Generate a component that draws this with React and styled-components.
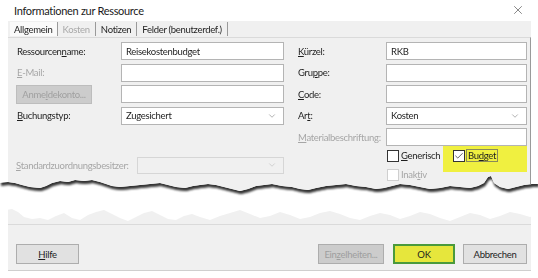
import React from "react";
import styled, { createGlobalStyle } from "styled-components";
import { X, ChevronDown, Check } from "lucide-react";

// torn paper edges: [x, y] points, clip-path builds a polygon from them

const topEdge = [
  [0, 183], [8, 182], [15, 183], [22, 185], [30, 187], [40, 188], [46, 186], [52, 183],
  [60, 181], [68, 182], [75, 180], [84, 181], [92, 180], [100, 182], [106, 184], [112, 186],
  [120, 187], [130, 186], [140, 185], [150, 184], [160, 183], [168, 185], [176, 187], [185, 188],
  [193, 186], [200, 185], [208, 184], [216, 185], [224, 187], [232, 189], [240, 191], [248, 189],
  [256, 186], [264, 185], [272, 184], [282, 186], [292, 187], [300, 189], [308, 190], [316, 188],
  [326, 186], [336, 185], [346, 184], [356, 186], [366, 187], [376, 189], [384, 188], [392, 186],
  [400, 184], [410, 185], [420, 187], [430, 189], [440, 188], [450, 186], [460, 187], [470, 188],
  [478, 186], [484, 183], [488, 177], [491, 176], [494, 183], [500, 187], [508, 189], [516, 187],
  [524, 185], [532, 184], [538, 184]
];

const bottomEdge = [
  [0, 214], [6, 210], [12, 209], [18, 212], [24, 217], [32, 219], [40, 218], [48, 220],
  [56, 216], [64, 213], [72, 218], [80, 220], [88, 215], [96, 212], [104, 210], [112, 214],
  [120, 218], [128, 221], [136, 217], [144, 213], [152, 211], [160, 215], [168, 219], [176, 220],
  [184, 216], [192, 214], [200, 217], [210, 220], [220, 216], [230, 213], [240, 210], [250, 214],
  [260, 218], [270, 216], [280, 212], [290, 215], [300, 219], [310, 217], [320, 213], [330, 211],
  [340, 214], [350, 218], [360, 220], [370, 216], [380, 213], [390, 215], [400, 219], [410, 216],
  [420, 212], [430, 214], [440, 218], [450, 221], [460, 217], [470, 213], [480, 215], [490, 219],
  [500, 216], [510, 212], [520, 214], [530, 217], [538, 215]
];

const topClip = `polygon(0 0, 538px 0, ${[...topEdge]
  .reverse()
  .map(([x, y]) => `${x}px ${y}px`)
  .join(", ")})`;

// bottom sheet starts at y=204, x=8
const bottomClip = `polygon(${bottomEdge
  .map(([x, y]) => `${x - 8}px ${y - 204}px`)
  .join(", ")}, 530px 100%, -8px 100%)`;

// css styling

const GlobalStyle = createGlobalStyle`
  html, body {
    margin: 0;
    padding: 0;
    background: #ffffff;
  }
  body {
    width: 538px;
    height: 278px;
    overflow: hidden;
    font-family: Lato, "Open Sans", "Liberation Sans", sans-serif;
    font-size: 9.5px;
    letter-spacing: -0.3px;
    color: #1e1e1e;
  }
  u {
    text-decoration-thickness: 1px;
    text-underline-offset: 1px;
  }
`;

const Page = styled.div`
  width: 538px;
  height: 278px;
  position: relative;
`;

const TornTop = styled.div`
  filter: drop-shadow(1px 3px 1px rgba(30, 30, 30, 0.9));
`;

const TopSheet = styled.div`
  height: 196px;
  background: #ffffff;
  clip-path: ${topClip};
`;

const TitleBar = styled.div`
  height: 20px;
  display: flex;
  align-items: center;
  justify-content: space-between;
  padding: 0 13px 0 14px;
  font-size: 11px;
  letter-spacing: -0.3px;
  color: #1a1a1a;
`;

const TabControl = styled.div`
  margin: 1px 7px 0 8px;
`;

const TabStrip = styled.div`
  height: 16px;
  display: flex;
  background: #f0f0f0;
  padding-left: 2px;
`;

const Tab = styled.div`
  display: flex;
  align-items: center;
  padding: 0 ${(p) => (p.$active ? 4 : 5)}px;
  border-right: 1px solid #9a9a9a;
  margin: 1px 0;
  background: ${(p) => (p.$active ? "#fafafa" : "transparent")};
  color: ${(p) => (p.$disabled ? "#a8a8a8" : "#1e1e1e")};
`;

const TabPage = styled.div`
  height: 170px;
  background: #f0f0f0;
  border-top: 1px solid #dadada;
  border-right: 1px solid #9a9a9a;
  padding: 4px 0 0 9px;
`;

const FormGrid = styled.div`
  display: grid;
  grid-template-columns: 104px 163px 14px 88px 141px;
  grid-auto-rows: 18px;
  row-gap: 3.5px;
  align-items: center;
`;

const Label = styled.div`
  color: ${(p) => (p.$disabled ? "#a6a6a6" : "#1e1e1e")};
  grid-column: ${(p) => p.$col};
  white-space: nowrap;
`;

const Field = styled.div`
  grid-column: ${(p) => p.$col};
  height: 18px;
  box-sizing: border-box;
  border: 1px solid ${(p) => (p.$disabled ? "#d6d6d6" : "#b4b4b4")};
  background: ${(p) => (p.$disabled ? "#f0f0f0" : "#ffffff")};
  display: flex;
  align-items: center;
  justify-content: space-between;
  padding: 0 6px 0 4px;
  color: #1e1e1e;
`;

const GreyButton = styled.div`
  grid-column: 1;
  width: 76px;
  height: 19px;
  margin-left: -1px;
  box-sizing: border-box;
  border: 1px solid #bdbdbd;
  background: #cccccc;
  color: #a0a0a0;
  display: flex;
  align-items: center;
  justify-content: center;
`;

const Lower = styled.div`
  display: grid;
  grid-template-columns: 120px 147px 102px 141px;
  grid-template-rows: 13px 13px;
  row-gap: 6px;
  margin-top: 3px;
`;

const OwnerLabel = styled.div`
  grid-column: 1;
  grid-row: 1 / span 2;
  align-self: center;
  color: #a6a6a6;
  margin-left: -1px;
  white-space: nowrap;
`;

const OwnerSelect = styled(Field)`
  grid-row: 1 / span 2;
  align-self: center;
  height: 17px;
`;

const CheckRow = styled.div`
  grid-column: 4;
  grid-row: ${(p) => p.$row};
  display: flex;
  align-items: center;
  margin-left: 1px;
`;

const CheckItem = styled.label`
  display: flex;
  align-items: center;
  gap: 2px;
  white-space: nowrap;
  width: ${(p) => p.$width || "auto"};
  color: ${(p) => (p.$disabled ? "#a6a6a6" : "#1e1e1e")};
`;

const Highlight = styled.div`
  background: #f0f040;
  margin: -4px -30px -10px -10px;
  padding: 4px 30px 10px 10px;
  display: flex;
  align-items: center;
  gap: 2px;
  white-space: nowrap;
`;

const Box = styled.span`
  width: 12px;
  height: 12px;
  box-sizing: border-box;
  border: 1px solid ${(p) => (p.$disabled ? "#cfcfcf" : "#333333")};
  background: #ffffff;
  display: flex;
  align-items: center;
  justify-content: center;
`;

const FocusText = styled.span`
  outline: 1px solid #8a8a5a;
  outline-offset: 0;
  padding: 0 1px;
`;

const Availability = styled.div`
  margin: 6px 0 0 -1px;
  color: #a6a6a6;
`;

const BottomSheet = styled.div`
  margin: 8px 7px 0 8px;
  height: 66px;
  background: #f0f0f0;
  border-bottom: 1px solid #cfcfcf;
  clip-path: ${bottomClip};
  display: flex;
  flex-direction: column;
`;

const PageEdge = styled.div`
  height: 20px;
  border-bottom: 1px solid #dadada;
`;

const ButtonBar = styled.div`
  display: flex;
  align-items: center;
  margin-top: 19px;
  padding: 0 4px 0 8px;
`;

const Button = styled.div`
  width: ${(p) => p.$width}px;
  height: 20px;
  box-sizing: border-box;
  margin-left: ${(p) => p.$gap || 0}px;
  display: flex;
  align-items: center;
  justify-content: center;
  border: ${(p) => (p.$primary ? "2px solid #4a9a3c" : "1px solid #adadad")};
  background: ${(p) =>
    p.$primary ? "#e6e63c" : p.$disabled ? "#cccccc" : "#e1e1e1"};
  color: ${(p) => (p.$disabled ? "#9e9e9e" : "#1e1e1e")};
`;

const Spacer = styled.div`
  flex: 1;
`;

const Chevron = () => <ChevronDown size={10} strokeWidth={1.2} color="#666" />;

function Checkbox({ checked, disabled }) {
  return (
    <Box $disabled={disabled}>
      {checked && <Check size={10} strokeWidth={1.6} color="#111" />}
    </Box>
  );
}

export default function App() {
  return (
    <Page>
      <GlobalStyle />
      <TornTop>
        <TopSheet>
          <TitleBar>
            <span>Informationen zur Ressource</span>
            <X size={14} strokeWidth={1} color="#333" />
          </TitleBar>
          <TabControl>
            <TabStrip>
              <Tab $active>Allgemein</Tab>
              <Tab $disabled>Kosten</Tab>
              <Tab>Notizen</Tab>
              <Tab>Felder (benutzerdef.)</Tab>
            </TabStrip>
            <TabPage>
              <FormGrid>
                <Label $col={1}>Ressourcen<u>n</u>ame:</Label>
                <Field $col={2}>Reisekostenbudget</Field>
                <Label $col={4}><u>K</u>ürzel:</Label>
                <Field $col={5}>RKB</Field>

                <Label $col={1} $disabled><u>E</u>-Mail:</Label>
                <Field $col={2} />
                <Label $col={4}>Gru<u>p</u>pe:</Label>
                <Field $col={5} />

                <GreyButton>Anme<u>l</u>dekonto...</GreyButton>
                <Field $col={2} />
                <Label $col={4}><u>C</u>ode:</Label>
                <Field $col={5} />

                <Label $col={1}><u>B</u>uchungstyp:</Label>
                <Field $col={2}>Zugesichert<Chevron /></Field>
                <Label $col={4}>Ar<u>t</u>:</Label>
                <Field $col={5}>Kosten<Chevron /></Field>

                <Label $col={4} $disabled><u>M</u>aterialbeschriftung:</Label>
                <Field $col={5} />
              </FormGrid>

              <Lower>
                <OwnerLabel><u>S</u>tandardzuordnungsbesitzer:</OwnerLabel>
                <OwnerSelect $col={2} $disabled>
                  <span />
                  <ChevronDown size={10} strokeWidth={1.2} color="#b0b0b0" />
                </OwnerSelect>
                <CheckRow $row={1}>
                  <CheckItem $width="66px">
                    <Checkbox />
                    <span><u>G</u>enerisch</span>
                  </CheckItem>
                  <Highlight>
                    <Checkbox checked />
                    <FocusText>Bu<u>d</u>get</FocusText>
                  </Highlight>
                </CheckRow>
                <CheckRow $row={2}>
                  <CheckItem $disabled>
                    <Checkbox disabled />
                    <span>Inak<u>t</u>iv</span>
                  </CheckItem>
                </CheckRow>
              </Lower>
              <Availability>Ressourcenverfügbarkeit</Availability>
            </TabPage>
          </TabControl>
        </TopSheet>
      </TornTop>

      <BottomSheet>
        <PageEdge />
        <ButtonBar>
          <Button $width={63}><u>H</u>ilfe</Button>
          <Spacer />
          <Button $width={66} $disabled>Ein<u>z</u>elheiten...</Button>
          <Button $width={62} $gap={9} $primary>OK</Button>
          <Button $width={64} $gap={8}>Abbrechen</Button>
        </ButtonBar>
      </BottomSheet>
    </Page>
  );
}
